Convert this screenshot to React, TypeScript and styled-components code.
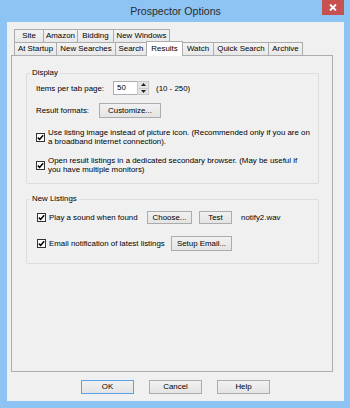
import styled, { createGlobalStyle } from 'styled-components';

const GlobalStyle = createGlobalStyle`
  html, body {
    margin: 0;
    padding: 0;
    background: #8dc4f4;
  }
  body {
    font-family: "Liberation Sans", Arial, sans-serif;
    font-size: 7.9px;
    color: #000;
  }
`;

const Window = styled.div`
  width: 350px;
  height: 408px;
  box-sizing: border-box;
  display: flex;
  flex-direction: column;
  background: #8dc4f4;
  padding: 0 6px 7px 7px;
`;

const TitleBar = styled.div`
  height: 22px;
  flex: none;
  display: grid;
  grid-template-columns: 1fr auto 1fr;
`;

const Title = styled.div`
  grid-column: 2;
  align-self: center;
  font-size: 10.6px;
  line-height: 1;
  color: #2c2c2c;
  margin-top: 1px;
`;

const CloseButton = styled.div`
  grid-column: 3;
  justify-self: end;
  align-self: start;
  width: 22px;
  height: 15px;
  background: #c75050;
  display: flex;
  align-items: center;
  justify-content: center;
`;

const Client = styled.div`
  flex: 1;
  display: flex;
  flex-direction: column;
  background: #f0f0f0;
  padding: 7px 0;
`;

const TabArea = styled.div`
  flex: 1;
  display: flex;
  flex-direction: column;
  margin: 0 11px 0 4px;
`;

const TabRow = styled.div`
  display: flex;
  align-items: flex-start;
  height: 13px;
  padding-left: 3px;
`;

const Tab = styled.div<{ $w: number; $active?: boolean }>`
  position: relative;
  z-index: ${(p) => (p.$active ? 2 : 1)};
  box-sizing: border-box;
  width: ${(p) => p.$w}px;
  height: ${(p) => (p.$active ? 15 : 13)}px;
  margin-top: ${(p) => (p.$active ? -1 : 0)}px;
  margin-right: -1px;
  border: 1px solid #acacac;
  border-bottom: none;
  background: ${(p) => (p.$active ? '#ffffff' : 'linear-gradient(#f3f3f3, #e8e8e8)')};
  text-align: center;
  line-height: ${(p) => (p.$active ? 13 : 12)}px;
  white-space: nowrap;
`;

const Panel = styled.div`
  flex: 1;
  display: flex;
  flex-direction: column;
  gap: 10px;
  border: 1px solid #adadad;
  background: #f0f0f0;
  padding: 12px 13px 0 14px;
`;

const Group = styled.fieldset`
  margin: 0;
  padding: 0;
  min-width: 0;
  border: 1px solid #dcdcdc;
  border-radius: 2px;
`;

const Legend = styled.legend`
  margin-left: 3px;
  padding: 0 2px;
  line-height: 10px;
`;

const GroupBody = styled.div<{ $pad: string }>`
  display: flex;
  flex-direction: column;
  padding: ${(p) => p.$pad};
`;

const Row = styled.div<{ $gap?: number }>`
  display: flex;
  align-items: center;
  margin-top: ${(p) => p.$gap ?? 0}px;
  white-space: nowrap;
`;

const Label = styled.span<{ $w: number }>`
  width: ${(p) => p.$w}px;
  flex: none;
`;

const Note = styled.span<{ $left: number }>`
  margin-left: ${(p) => p.$left}px;
`;

const Spinner = styled.div`
  box-sizing: border-box;
  width: 36px;
  height: 14px;
  display: flex;
  border: 1px solid #abadb3;
  background: #fff;
`;

const SpinValue = styled.span`
  flex: 1;
  padding-left: 3px;
  line-height: 12px;
`;

const SpinButtons = styled.div`
  width: 11px;
  display: flex;
  flex-direction: column;
`;

const SpinHalf = styled.div`
  flex: 1;
  display: flex;
  align-items: center;
  justify-content: center;
  background: #e4e4e4;
  border: 1px solid #c9c9c9;
  margin: -1px -1px 0 0;
  &:last-child {
    margin-bottom: -1px;
  }
`;

const Button = styled.div<{ $w: number; $h?: number; $default?: boolean }>`
  box-sizing: border-box;
  flex: none;
  width: ${(p) => p.$w}px;
  height: ${(p) => p.$h ?? 15}px;
  line-height: ${(p) => (p.$h ?? 15) - 2}px;
  border: 1px solid ${(p) => (p.$default ? '#5ba3e6' : '#acacac')};
  background: linear-gradient(#f1f1f1, #e4e4e4);
  text-align: center;
  white-space: nowrap;
`;

const CheckItem = styled.div<{ $w?: number; $gap?: number }>`
  display: flex;
  align-items: center;
  gap: 3px;
  width: ${(p) => (p.$w ? `${p.$w}px` : 'auto')};
  flex: none;
  margin-top: ${(p) => p.$gap ?? 0}px;
`;

const Box = styled.div`
  box-sizing: border-box;
  width: 9px;
  height: 9px;
  flex: none;
  border: 1px solid #333;
  background: #fff;
  display: flex;
  align-items: center;
  justify-content: center;
`;

const MultiText = styled.div`
  line-height: 9px;
  white-space: nowrap;
`;

const Footer = styled.div`
  display: flex;
  justify-content: center;
  gap: 15px;
  margin-top: 8px;
`;

const Check = () => (
  <Box>
    <svg width="7" height="7" viewBox="0 0 7 7">
      <path d="M0.8 3.6 L2.6 5.4 L6.2 1.2" fill="none" stroke="#000" strokeWidth="1.5" />
    </svg>
  </Box>
);

const Arrow = ({ up }: { up?: boolean }) => (
  <svg width="5" height="3" viewBox="0 0 5 3">
    <path d={up ? 'M0 3 L2.5 0 L5 3 Z' : 'M0 0 L2.5 3 L5 0 Z'} fill="#222" />
  </svg>
);

const row1Tabs = [
  { label: 'Site', w: 30 },
  { label: 'Amazon', w: 35 },
  { label: 'Bidding', w: 37 },
  { label: 'New Windows', w: 57 },
];

const row2Tabs = [
  { label: 'At Startup', w: 43 },
  { label: 'New Searches', w: 60 },
  { label: 'Search', w: 32 },
  { label: 'Results', w: 37, active: true },
  { label: 'Watch', w: 32 },
  { label: 'Quick Search', w: 56 },
  { label: 'Archive', w: 35 },
];

export default function App() {
  return (
    <>
      <GlobalStyle />
      <Window>
        <TitleBar>
          <Title>Prospector Options</Title>
          <CloseButton>
            <svg width="8" height="7" viewBox="0 0 8 7">
              <path d="M1 0.5 L7 6.5 M7 0.5 L1 6.5" stroke="#fff" strokeWidth="1.8" />
            </svg>
          </CloseButton>
        </TitleBar>
        <Client>
          <TabArea>
            <TabRow>
              {row1Tabs.map((t) => (
                <Tab key={t.label} $w={t.w}>
                  {t.label}
                </Tab>
              ))}
            </TabRow>
            <TabRow>
              {row2Tabs.map((t) => (
                <Tab key={t.label} $w={t.w} $active={t.active}>
                  {t.label}
                </Tab>
              ))}
            </TabRow>
            <Panel>
              <Group>
                <Legend>Display</Legend>
                <GroupBody $pad="3px 0 9px 9px">
                  <Row>
                    <Label $w={77}>Items per tab page:</Label>
                    <Spinner>
                      <SpinValue>50</SpinValue>
                      <SpinButtons>
                        <SpinHalf>
                          <Arrow up />
                        </SpinHalf>
                        <SpinHalf>
                          <Arrow />
                        </SpinHalf>
                      </SpinButtons>
                    </Spinner>
                    <Note $left={7}>(10 - 250)</Note>
                  </Row>
                  <Row $gap={8}>
                    <Label $w={63}>Result formats:</Label>
                    <Button $w={62}>Customize...</Button>
                  </Row>
                  <CheckItem $gap={10}>
                    <Check />
                    <MultiText>
                      Use listing image instead of picture icon. (Recommended only if you are on
                      <br />
                      a broadband internet connection).
                    </MultiText>
                  </CheckItem>
                  <CheckItem $gap={10}>
                    <Check />
                    <MultiText>
                      Open result listings in a dedicated secondary browser. (May be useful if
                      <br />
                      you have multiple monitors)
                    </MultiText>
                  </CheckItem>
                </GroupBody>
              </Group>
              <Group>
                <Legend>New Listings</Legend>
                <GroupBody $pad="7px 0 12px 10px">
                  <Row>
                    <CheckItem $w={110}>
                      <Check />
                      <span>Play a sound when found</span>
                    </CheckItem>
                    <Button $w={45} $h={13}>
                      Choose...
                    </Button>
                    <Note $left={7}>
                      <Button $w={33} $h={13}>
                        Test
                      </Button>
                    </Note>
                    <Note $left={9}>notify2.wav</Note>
                  </Row>
                  <Row $gap={12}>
                    <CheckItem $w={134}>
                      <Check />
                      <span>Email notification of latest listings</span>
                    </CheckItem>
                    <Button $w={61}>Setup Email...</Button>
                  </Row>
                </GroupBody>
              </Group>
            </Panel>
          </TabArea>
          <Footer>
            <Button $w={53} $h={14} $default>
              OK
            </Button>
            <Button $w={53} $h={14}>
              Cancel
            </Button>
            <Button $w={53} $h={14}>
              Help
            </Button>
          </Footer>
        </Client>
      </Window>
    </>
  );
}
